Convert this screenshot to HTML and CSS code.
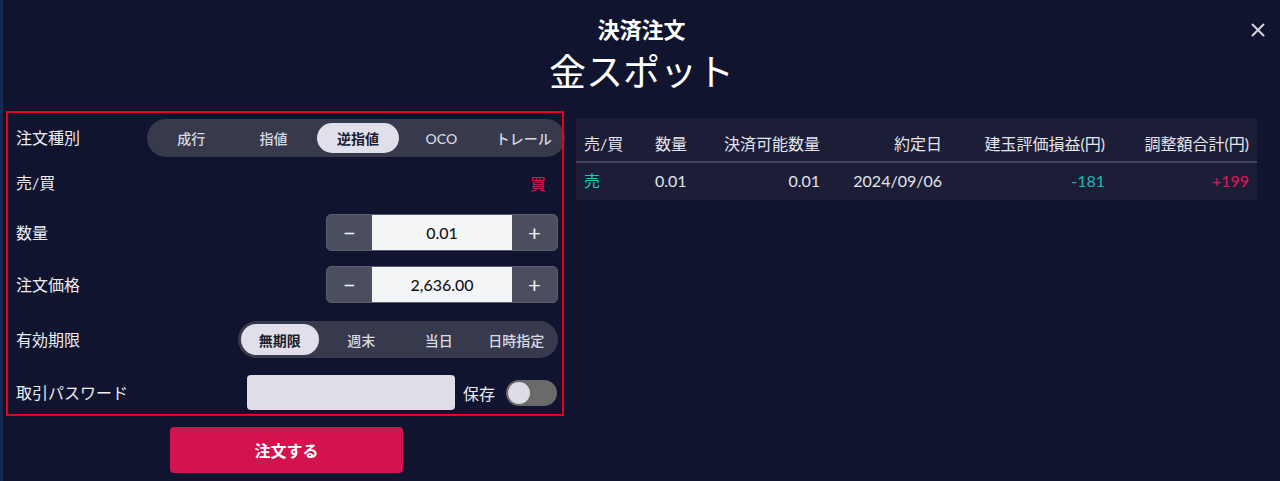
FILE: index.html
```html
<!DOCTYPE html>
<html lang="ja">
<head>
<meta charset="utf-8">
<title>決済注文</title>
<link rel="stylesheet" href="styles.css">
</head>
<body>
<div class="page">
  <div class="modal">
    <header class="modal-head">
      <div class="title">決済注文</div>
      <div class="subtitle">金スポット</div>
      <button class="close" aria-label="close">
        <svg width="14" height="14" viewBox="0 0 14 14"><path d="M1.5 1.5 L12.5 12.5 M12.5 1.5 L1.5 12.5" stroke="#d4d5de" stroke-width="2" stroke-linecap="round" fill="none"/></svg>
      </button>
    </header>
    <div class="content">
      <div class="form-col">
        <div class="form-box">
          <div class="row row-type">
            <span class="label">注文種別</span>
            <div class="seg seg-type">
              <span class="seg-item">成行</span>
              <span class="seg-item">指値</span>
              <span class="seg-item active">逆指値</span>
              <span class="seg-item">OCO</span>
              <span class="seg-item">トレール</span>
            </div>
          </div>
          <div class="row row-side">
            <span class="label">売/買</span>
            <span class="side-buy">買</span>
          </div>
          <div class="row row-qty">
            <span class="label">数量</span>
            <div class="stepper">
              <span class="step-btn">&minus;</span>
              <span class="step-val">0.01</span>
              <span class="step-btn">+</span>
            </div>
          </div>
          <div class="row row-price">
            <span class="label">注文価格</span>
            <div class="stepper">
              <span class="step-btn">&minus;</span>
              <span class="step-val">2,636.00</span>
              <span class="step-btn">+</span>
            </div>
          </div>
          <div class="row row-exp">
            <span class="label">有効期限</span>
            <div class="seg seg-exp">
              <span class="seg-item active">無期限</span>
              <span class="seg-item">週末</span>
              <span class="seg-item">当日</span>
              <span class="seg-item">日時指定</span>
            </div>
          </div>
          <div class="row row-pass">
            <span class="label">取引パスワード</span>
            <div class="pass-group">
              <span class="pass-input"></span>
              <span class="save-label">保存</span>
              <span class="toggle"><span class="knob"></span></span>
            </div>
          </div>
        </div>
        <button class="submit">注文する</button>
      </div>
      <div class="table">
        <div class="tr th">
          <span class="c-left">売/買</span>
          <span class="c-left">数量</span>
          <span class="c-right">決済可能数量</span>
          <span class="c-right">約定日</span>
          <span class="c-right">建玉評価損益(円)</span>
          <span class="c-right">調整額合計(円)</span>
        </div>
        <div class="tr td">
          <span class="c-left sell">売</span>
          <span class="c-left">0.01</span>
          <span class="c-right">0.01</span>
          <span class="c-right">2024/09/06</span>
          <span class="c-right neg">-181</span>
          <span class="c-right pos">+199</span>
        </div>
      </div>
    </div>
  </div>
</div>
</body>
</html>
```
FILE: styles.css
```css
* { box-sizing: border-box; }
html, body {
  margin: 0;
  padding: 0;
  background: #11142e;
  width: 1280px;
  height: 481px;
  overflow: hidden;
  font-family: Lato, "Noto Sans CJK JP", sans-serif;
  color: #e6e6ee;
}
.page {
  height: 481px;
  border-left: 3px solid #172a4e;
}
.modal {
  position: relative;
  height: 100%;
}
.modal-head {
  padding-top: 15px;
  text-align: center;
  color: #ffffff;
}
.title {
  font-size: 22px;
  font-weight: 700;
  line-height: 30px;
}
.subtitle {
  margin-top: 3px;
  font-size: 37px;
  font-weight: 400;
  line-height: 48px;
}
.close {
  position: absolute;
  top: 23px;
  right: 15px;
  width: 14px;
  height: 14px;
  padding: 0;
  border: 0;
  background: none;
  display: flex;
}
.content {
  display: flex;
  gap: 12px;
  margin-top: 15px;
  padding-left: 3px;
}
.form-col {
  width: 558px;
  display: flex;
  flex-direction: column;
  align-items: center;
}
.form-box {
  position: relative;
  width: 558px;
  padding: 8px 6px 6px 10px;
}
/* red highlight frame drawn over the content */
.form-box::after {
  content: "";
  position: absolute;
  inset: 0;
  border: 2px solid #e6001b;
  pointer-events: none;
}
.row {
  display: flex;
  align-items: center;
  justify-content: space-between;
}
.label {
  font-size: 16px;
  line-height: 22px;
  color: #ececf2;
}
.row-type { height: 38px; }
.row-side { height: 38px; margin-top: 7px; }
.row-qty { height: 37px; margin-top: 12px; }
.row-price { height: 37px; margin-top: 15px; }
.row-exp { height: 37px; margin-top: 18px; }
.row-pass { height: 35px; margin-top: 17px; }

.seg {
  display: flex;
  background: #373a4c;
  border-radius: 19px;
  padding: 3px;
  height: 100%;
}
.seg-type { width: 418px; margin-right: -7px; padding-right: 0; }
.seg-exp { width: 320px; }
.seg-item {
  flex: 1 1 0;
  display: flex;
  align-items: center;
  justify-content: center;
  white-space: nowrap;
  font-size: 14px;
  font-weight: 500;
  color: #d9d9e2;
  border-radius: 16px;
}
.seg-type .seg-item.active { margin: 1px 1px 1px 2px; }
.seg-exp .seg-item.active { margin-right: 4px; }
.seg-item.active {
  background: #e1e0ea;
  color: #1b1d30;
  font-weight: 700;
}
.side-buy {
  color: #e0134f;
  font-size: 16px;
  margin-right: 12px;
}
.stepper {
  display: flex;
  width: 232px;
  height: 37px;
  border-radius: 5px;
  overflow: hidden;
  border: 1px solid #5a5d6e;
  background: #4b4e5f;
}
.step-btn {
  width: 45px;
  display: flex;
  align-items: center;
  justify-content: center;
  color: #f2f2f6;
  font-size: 22px;
  font-weight: 400;
}
.step-val {
  flex: 1;
  background: #f4f5f7;
  color: #151517;
  display: flex;
  align-items: center;
  justify-content: center;
  font-size: 16px;
  font-weight: 500;
}
.pass-group {
  display: flex;
  align-items: center;
  height: 100%;
  margin-right: 1px;
}
.pass-input {
  width: 208px;
  height: 35px;
  background: #dfdee7;
  border-radius: 4px;
}
.save-label {
  margin-left: 8px;
  font-size: 16px;
  color: #ececf2;
}
.toggle {
  margin-left: 11px;
  width: 51px;
  height: 26px;
  border-radius: 13px;
  background: #6a6a6a;
  display: flex;
  align-items: center;
  padding-left: 2px;
}
.knob {
  width: 22px;
  height: 22px;
  border-radius: 50%;
  background: #dcdce4;
}
.submit {
  margin-top: 11px;
  margin-left: 3px;
  width: 233px;
  height: 46px;
  border: 0;
  border-radius: 4px;
  background: #d3134f;
  color: #ffffff;
  font-family: Lato, "Noto Sans CJK JP", sans-serif;
  font-size: 16px;
  font-weight: 700;
}
.table {
  width: 681px;
  margin-top: 7px;
  align-self: flex-start;
  background: #1c1e38;
}
.tr {
  display: grid;
  grid-template-columns: 71px 63px 118px 122px 163px 144px;
  font-size: 16px;
  line-height: 22px;
}
.th {
  padding: 15px 0 6px;
  border-bottom: 2px solid #42455b;
  color: #e4e4ec;
}
.td {
  padding: 7px 0 8px;
  color: #e4e4ec;
}
.c-left { text-align: left; padding-left: 8px; }
.c-right { text-align: right; padding-right: 8px; }
.sell { color: #22c6bd; }
.neg { color: #1cb9b1; }
.pos { color: #e0145a; }
```
